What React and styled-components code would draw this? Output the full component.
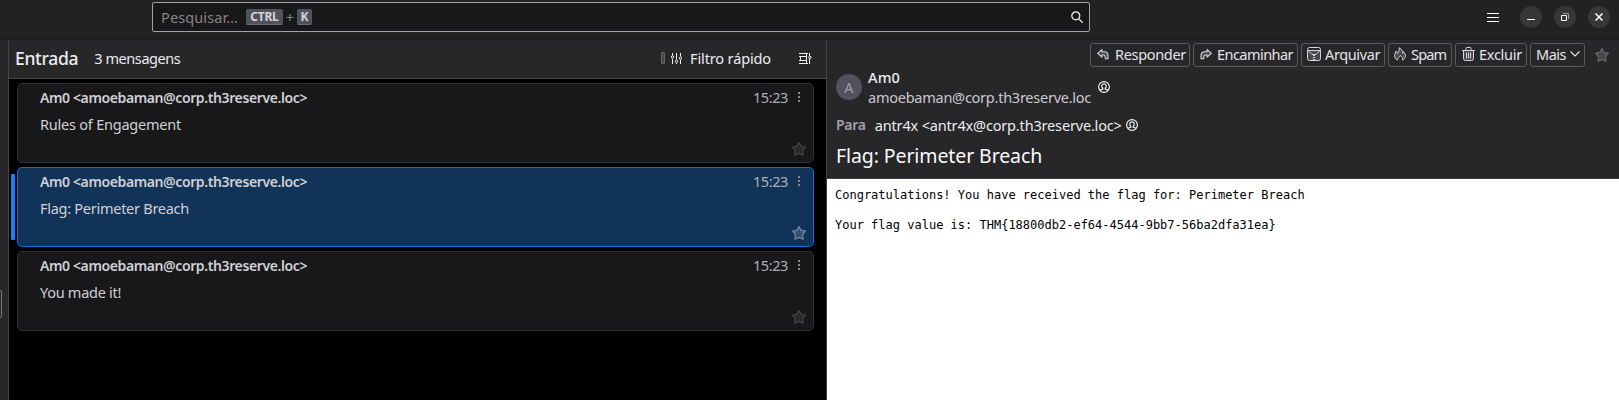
import React from "react";
import styled, { createGlobalStyle, css } from "styled-components";

const Global = createGlobalStyle`
  * { box-sizing: border-box; }
  html, body { margin: 0; height: 400px; overflow: hidden; background: #222222; }
  body { font-family: "Noto Sans", "Open Sans", sans-serif; font-size: 14.5px; color: #ececef; }
  svg { display: block; flex: none; }
`;

const Window = styled.div`
  width: 1619px;
  height: 400px;
  display: flex;
  flex-direction: column;
`;

const TitleBar = styled.header`
  height: 40px;
  flex: none;
  display: flex;
  justify-content: space-between;
  background: #222222;
  border-bottom: 1px solid #1c1c1c;
  padding: 2px 9px 0 152px;
`;

const SearchBox = styled.div`
  width: 938px;
  height: 30px;
  display: flex;
  align-items: center;
  padding: 0 6px 0 8px;
  background: #18181b;
  border: 1px solid #a1a1aa;
  border-radius: 2px;
  color: #85857f;
`;

const Label = styled.span`
  white-space: pre;
  line-height: 20px;
  letter-spacing: ${(p) => p.$track || 0}px;
  ${(p) => p.$size && css`font-size: ${p.$size}px;`}
  ${(p) => p.$weight && css`font-weight: ${p.$weight};`}
  ${(p) => p.$color && css`color: ${p.$color};`}
`;

const Key = styled.kbd`
  width: ${(p) => p.$width}px;
  height: 16px;
  display: flex;
  align-items: center;
  justify-content: center;
  background: #52525b;
  border-bottom: 1px solid #6b6b74;
  border-radius: 2px;
  color: #d4d4d8;
  font: bold 12px/14px "Noto Sans", sans-serif;
  letter-spacing: -0.2px;
`;

const Plus = styled.span`
  width: 14px;
  text-align: center;
  line-height: 18px;
`;

const Spacer = styled.div`
  flex: ${(p) => (p.$width ? `0 0 ${p.$width}px` : "1")};
`;

const WindowControls = styled.div`
  display: flex;
  align-items: center;
  height: 30px;
  gap: 12px;
`;

const MenuIcon = styled.svg`
  margin-right: 9px;
`;

const RoundButton = styled.button`
  width: 22px;
  height: 22px;
  padding: 0;
  border: 0;
  border-radius: 50%;
  background: #373737;
  display: flex;
  align-items: center;
  justify-content: center;
`;

const Main = styled.main`
  flex: 1;
  display: flex;
  min-height: 0;
`;

const FolderStrip = styled.aside`
  width: 9px;
  background: #27272a;
  border-right: 1px solid #46464d;
  padding-top: 250px;
`;

const ScrollGrip = styled.div`
  width: 2px;
  height: 28px;
  border: 1px solid #77777d;
  border-left: 0;
  border-radius: 0 2px 2px 0;
`;

const ThreadPane = styled.section`
  width: 818px;
  display: flex;
  flex-direction: column;
  background: #000;
  border-right: 1px solid #3f3f46;
`;

const ThreadHeader = styled.div`
  height: 39px;
  flex: none;
  display: flex;
  align-items: center;
  background: #27272a;
  border-bottom: 1px solid #46464d;
  padding: 0 14px 2px 6px;
`;

const PinMark = styled.i`
  width: 4px;
  height: 12px;
  border: 1px solid #66666b;
  border-radius: 1px;
  background: #48484b;
`;

const CardList = styled.ul`
  list-style: none;
  margin: 0;
  padding: 4px 0 0 2px;
  display: flex;
  flex-direction: column;
  gap: 4px;
`;

const CardRow = styled.li`
  display: flex;
  align-items: center;
  gap: 2px;
`;

const Marker = styled.i`
  width: 4px;
  height: 66px;
  border-radius: 1px;
  background: ${(p) => (p.$on ? "#1a80f5" : "transparent")};
`;

const Card = styled.article`
  width: 797px;
  height: 80px;
  border: 1px solid ${(p) => (p.$on ? "#0a6fe0" : "#303033")};
  border-radius: 5px;
  background: ${(p) => (p.$on ? "#123358" : "#18181b")};
  display: flex;
  justify-content: space-between;
  padding: 3px 7px 6px 22px;
  color: #d0d0d4;
`;

const CardText = styled.div`
  display: flex;
  flex-direction: column;
  gap: 6px;
  padding-top: 1px;
`;

const CardSide = styled.div`
  display: flex;
  flex-direction: column;
  justify-content: space-between;
  align-items: flex-end;
`;

const TimeRow = styled.div`
  display: flex;
  align-items: center;
  gap: 10px;
  padding-right: 6px;
  color: #b0b0b7;
`;

const MessagePane = styled.section`
  flex: 1;
  display: flex;
  flex-direction: column;
  background: #fff;
`;

const MessageHeader = styled.div`
  height: 139px;
  flex: none;
  background: #27272a;
  border-bottom: 1px solid #3f3f46;
  padding: 3px 10px 0 9px;
`;

const Toolbar = styled.div`
  height: 24px;
  display: flex;
  justify-content: flex-end;
  gap: 3px;
`;

const ToolButton = styled.button`
  width: ${(p) => p.$width}px;
  height: 24px;
  padding: 0 0 2px ${(p) => p.$pad}px;
  display: flex;
  align-items: center;
  gap: ${(p) => p.$gap}px;
  border: 1px solid #5b5b5f;
  border-radius: 3px;
  background: transparent;
  color: #e4e4e7;
  font: inherit;
`;

const StarSlot = styled.div`
  width: 21px;
  display: flex;
  align-items: center;
  justify-content: flex-end;
`;

const Sender = styled.div`
  display: flex;
  align-items: center;
  height: 40px;
`;

const Avatar = styled.div`
  width: 26px;
  height: 26px;
  margin-right: 6px;
  border-radius: 50%;
  background: #52525e;
  color: #9d9da8;
  display: flex;
  align-items: center;
  justify-content: center;
`;

const SenderLines = styled.div`
  display: flex;
  flex-direction: column;
  width: 223px;
  margin-right: 7px;
`;

const Recipients = styled.div`
  display: flex;
  align-items: center;
  height: 36px;
`;

const Subject = styled.h1`
  margin: 0;
  font-size: 19.5px;
  font-weight: 400;
  line-height: 26px;
  letter-spacing: -0.1px;
  color: #fbfbfe;
`;

const Body = styled.pre`
  margin: 0;
  padding: 9px 8px;
  color: #000;
  font: 12px/15px "DejaVu Sans Mono", monospace;
`;

const Star = ({ stroke, fill }) => (
  <svg width="14" height="14" viewBox="0 0 14 14" fill={fill} stroke={stroke} strokeWidth="1.2" strokeLinejoin="round">
    <path d="M7 .6 9.100 4.400 13.400 5.200 10.500 8.500 11.100 13.300 7 11.400 2.900 13.300 3.500 8.500.6 5.200 4.900 4.400Z" />
  </svg>
);

const Dots = () => (
  <svg width="2" height="10" fill="#8a8a91">
    <path d="M0 0h2v2H0zM0 4h2v2H0zM0 8h2v2H0z" />
  </svg>
);

const Person = () => (
  <svg width="12" height="12" viewBox="0 0 12 12" fill="none" stroke="#f0f0f3" strokeWidth="1.2">
    <circle cx="6" cy="6" r="5.400" />
    <path d="M2.300 9.700c.2-1 .9-1.200 2.500-1.500V7.200C3 6 3.400 2.900 6 2.900S9 6 7.200 7.200v1c1.600.3 2.300.5 2.500 1.500" />
  </svg>
);

const Reply = ({ flip }) => (
  <svg width="12" height="12" viewBox="0 0 12 12" fill="#4a4a4e" stroke="#dcdce0" strokeWidth="1.100" strokeLinejoin="round">
    <path transform={flip ? "matrix(-1 0 0 1 12 0)" : undefined} d="M4.900 1.600.7 5.400 4.900 9.200V7h1.600c1.500 0 1.800 1.200 1.800 3.800h2.700V8C11 5.200 9.800 3.800 7.500 3.800H4.900Z" />
  </svg>
);

const Archive = () => (
  <svg width="14" height="14" viewBox="0 0 14 14" fill="none" stroke="#d4d4d8">
    <path d="M.5 3.500v8a2 2 0 0 0 2 2h9a2 2 0 0 0 2-2v-8Z" fill="#4a4a4e" />
    <path d="M.5 3.500v-1a2 2 0 0 1 2-2h9a2 2 0 0 1 2 2v1M1.500 4 5 7.500M12.500 4 9 7.500M5 7.500h4" />
    <path d="M7 8v5" strokeWidth="2" strokeDasharray="1 1" />
  </svg>
);

const Flame = () => (
  <svg width="12" height="14" viewBox="0 0 12 14" fill="#4a4a4e" stroke="#d4d4d8" strokeLinejoin="round">
    <path d="M3.500 13C1.500 12 .5 10.500.6 8.500.7 6.500 1.800 5.500 2 4c1 .7 1.400 1.500 1.500 2.500C5 5 5.500 3 5 .8c2.500 1 3.800 3 3.600 5.400.6-.3.900-.9 1-1.500 1.200 1.300 1.800 2.800 1.700 4.300-.1 2-1 3.200-2.800 4 .4-2-.5-3.500-2.300-4.500C6 10 3.500 10.500 3.500 13Z" />
  </svg>
);

const Trash = () => (
  <svg width="13" height="14" viewBox="0 0 13 14" fill="none" stroke="#d4d4d8">
    <path d="M1.500 3.500v8a2 2 0 0 0 2 2h6a2 2 0 0 0 2-2v-8" fill="#4a4a4e" />
    <path d="M0 3.500h13M4 3V1.500a1 1 0 0 1 1-1h3a1 1 0 0 1 1 1V3M4.500 5.500v6M6.500 5.500v6M8.500 5.500v6" />
  </svg>
);

const SlidersIcon = () => (
  <svg width="11" height="11" fill="none" stroke="#f0f0f3">
    <path d="M1.500 0v2.500M1.500 6v5M5.500 0v6.500M5.500 10v1M9.500 0v3.500M9.500 7v4" />
    <circle cx="1.500" cy="4" r="1.200" />
    <circle cx="5.500" cy="8.300" r="1.200" />
    <circle cx="9.500" cy="5.200" r="1.200" />
  </svg>
);

const DisplayIcon = () => (
  <svg width="13" height="13" fill="none" stroke="#f0f0f3">
    <path d="M0 1.500h9M0 4.500h7M0 8.500h7M0 11.500h9M1.500 4v5M7.500 1v11M10.500 1v3M10.500 7v5" />
    <circle cx="10.900" cy="5.500" r="1.200" />
  </svg>
);

const messages = [
  { subject: "Rules of Engagement", track: -0.22 },
  { subject: "Flag: Perimeter Breach", track: -0.27, on: true },
  { subject: "You made it!", track: -0.28 },
];

const tools = [
  { label: "Responder", icon: <Reply />, width: 100, pad: 6, gap: 6, track: -0.32 },
  { label: "Encaminhar", icon: <Reply flip />, width: 105, pad: 6, gap: 5, track: -0.54 },
  { label: "Arquivar", icon: <Archive />, width: 84, pad: 5, gap: 4, track: -0.38 },
  { label: "Spam", icon: <Flame />, width: 64, pad: 5, gap: 5, track: -0.8 },
  { label: "Excluir", icon: <Trash />, width: 72, pad: 6, gap: 4, track: -0.26 },
];

export default function App() {
  return (
    <Window>
      <Global />
      <TitleBar>
        <SearchBox>
          <Label $track={0.12}>Pesquisar…</Label>
          <Spacer $width={8} />
          <Key $width={37}>CTRL</Key>
          <Plus>+</Plus>
          <Key $width={15}>K</Key>
          <Spacer />
          <svg width="12" height="12" fill="none" stroke="#fbfbfe" strokeWidth="1.200"><circle cx="4.800" cy="4.800" r="4" /><path d="m7.800 7.800 4 4" /></svg>
        </SearchBox>
        <WindowControls>
          <MenuIcon width="12" height="9" stroke="#fff"><path d="M0 .5h12M0 4.500h12M0 8.500h12" /></MenuIcon>
          <RoundButton><svg width="8" height="8" stroke="#fff"><path d="M0 6.500h8" /></svg></RoundButton>
          <RoundButton><svg width="8" height="8" fill="none" stroke="#fff"><path d="M.5 2.500h5v5h-5z" /><path d="M2 .5h5.500V6" stroke="#999" /></svg></RoundButton>
          <RoundButton><svg width="8" height="8" stroke="#fff" strokeWidth="1.500"><path d="m.5.5 7 7M7.500.5l-7 7" /></svg></RoundButton>
        </WindowControls>
      </TitleBar>
      <Main>
        <FolderStrip><ScrollGrip /></FolderStrip>
        <ThreadPane>
          <ThreadHeader>
            <Label $size={17.5} $weight={500} $track={-0.3}>Entrada</Label>
            <Spacer $width={16} />
            <Label $track={-0.43}>3 mensagens</Label>
            <Spacer />
            <PinMark />
            <Spacer $width={6} />
            <SlidersIcon />
            <Spacer $width={8} />
            <Label $track={-0.13}>Filtro rápido</Label>
            <Spacer $width={28} />
            <DisplayIcon />
          </ThreadHeader>
          <CardList>
            {messages.map((m) => (
              <CardRow key={m.subject}>
                <Marker $on={m.on} />
                <Card $on={m.on}>
                  <CardText>
                    <Label $size={14} $weight={600} $track={-0.385}>Am0 &lt;amoebaman@corp.th3reserve.loc&gt;</Label>
                    <Label $track={m.track}>{m.subject}</Label>
                  </CardText>
                  <CardSide>
                    <TimeRow><Label $track={-0.41}>15:23</Label><Dots /></TimeRow>
                    <Star stroke={m.on ? "#7089a5" : "#454549"} fill={m.on ? "#36506f" : "#28282b"} />
                  </CardSide>
                </Card>
              </CardRow>
            ))}
          </CardList>
        </ThreadPane>
        <MessagePane>
          <MessageHeader>
            <Toolbar>
              {tools.map((t) => (
                <ToolButton key={t.label} $width={t.width} $pad={t.pad} $gap={t.gap}>
                  {t.icon}
                  <Label $track={t.track}>{t.label}</Label>
                </ToolButton>
              ))}
              <ToolButton $width={55} $pad={5} $gap={4}>
                <Label $track={-0.49}>Mais</Label>
                <svg width="10" height="6" fill="none" stroke="#e4e4e7" strokeWidth="1.200"><path d="m.5.5 4.500 4.500L9.500.5" /></svg>
              </ToolButton>
              <StarSlot><Star stroke="#66666b" fill="#45454a" /></StarSlot>
            </Toolbar>
            <Sender>
              <Avatar>A</Avatar>
              <SenderLines>
                <Label $weight={500} $track={0.15}>Am0</Label>
                <Label $track={-0.25} $color="#c9c9ce">amoebaman@corp.th3reserve.loc</Label>
              </SenderLines>
              <Person />
            </Sender>
            <Recipients>
              <Label $size={14} $weight={600} $track={-0.25} $color="#a1a1aa">Para</Label>
              <Spacer $width={9} />
              <Label $track={-0.17}>antr4x &lt;antr4x@corp.th3reserve.loc&gt;</Label>
              <Spacer $width={4} />
              <Person />
            </Recipients>
            <Subject>Flag: Perimeter Breach</Subject>
          </MessageHeader>
          <Body>{"Congratulations! You have received the flag for: Perimeter Breach\n\nYour flag value is: THM{18800db2-ef64-4544-9bb7-56ba2dfa31ea}"}</Body>
        </MessagePane>
      </Main>
    </Window>
  );
}
